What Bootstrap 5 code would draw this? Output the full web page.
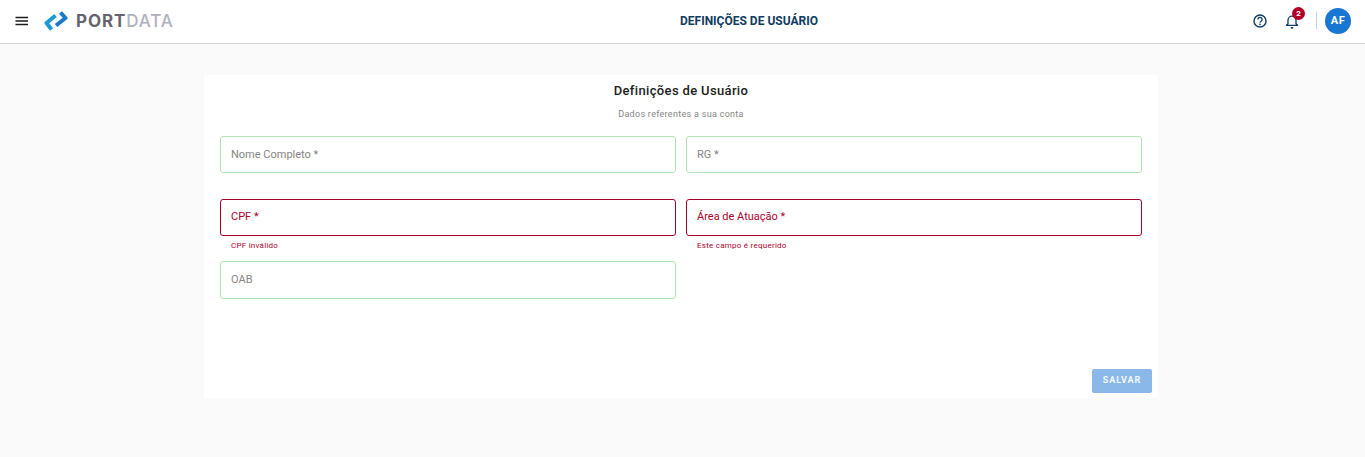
<!DOCTYPE html>
<html lang="pt-BR">
<head>
<meta charset="utf-8">
<title>Definições de Usuário</title>
<link rel="stylesheet" href="https://cdn.jsdelivr.net/npm/bootstrap@5.3.0/dist/css/bootstrap.min.css">
<style>
html,body{height:457px;overflow:hidden}
body{background:#fafafa;font-family:Roboto,"Liberation Sans",sans-serif;color:#212121}
.top-bar{height:44px;background:#fff;border-bottom:1px solid #d4d4d4;padding:0 14px 2px 15px}
.top-left{width:665px}
.menu-btn{width:14px;height:10px;flex:none}
.brand{margin-left:15px;gap:8px}
.brand-text{font-family:Inter,"Liberation Sans",sans-serif;font-size:17px;line-height:20px;letter-spacing:.9px;color:#64646e;font-weight:700}
.brand-text span{color:#b0b1bd;font-weight:500}
.top-title{font-size:12px;font-weight:700;color:#0f3c61;line-height:16px}
.top-right{flex:1 1 auto}
.icon-slot{position:relative;width:16px;height:16px}
.icon-slot svg{display:block}
.help{margin-right:16px}
.notif-count{position:absolute;left:8px;top:-6px;width:13px;height:13px;border-radius:50%;background:#b00029;color:#fff;font-size:8px;font-weight:700;line-height:13px;text-align:center}
.sep{width:1px;height:17px;background:#b9d3ea;margin:0 8px 0 16px}
.avatar{width:26px;height:26px;border-radius:50%;background:#1976d2;color:#fff;font-size:11px;font-weight:700;line-height:26px;text-align:center;letter-spacing:.5px}
.sheet{width:954px;height:323px;margin:31px 0 0 204px;background:#fff;border-radius:2px;padding:0 16px;position:relative}
.sheet-title{font-size:13px;font-weight:500;line-height:16px;padding-top:8px;letter-spacing:.35px;color:#212121;box-sizing:content-box}
.sheet-sub{font-size:9px;line-height:12px;margin-top:9px;color:#858585;letter-spacing:.3px}
.form-cols{display:grid;grid-template-columns:456px 456px;column-gap:10px;margin-top:16px}
.fld{height:63px}
.fld.short{height:62px}
.fld-box{height:37px;border:1px solid #b2e2b5;border-radius:3px;padding:0 10px;font-size:11px;line-height:35px;color:#858585;display:block;background:#fff}
.fld-box.last{height:38px}
.fld-err .fld-box{border-color:#a8002d;color:#b00029;line-height:34px}
.err-msg{font-size:8px;line-height:10px;color:#b00029;padding:5px 11px 0;letter-spacing:.25px}
.save-row{position:absolute;right:6px;bottom:5px}
.save-btn{width:60px;height:24px;background:#8ab8e8;border:0;border-radius:2px;color:#f4f8fd;font-size:9px;font-weight:700;letter-spacing:.95px;padding:0}
</style>
</head>
<body>
<header class="top-bar d-flex align-items-center">
  <div class="top-left d-flex align-items-center">
    <svg class="menu-btn" viewBox="0 0 14 10"><path d="M.5 1.500h12.500M.5 5h12.500M.5 8.500h12.500" stroke="#1c1c1c" stroke-width="1.300" fill="none"/></svg>
    <div class="brand d-flex align-items-center">
      <svg width="24" height="22" viewBox="0 0 24 22" fill="none" stroke-width="4" stroke-linejoin="round"><polyline points="11.500,5.500 2.500,13 7.500,19.500" stroke="#1a9ad6"/><polyline points="12,15.500 21.500,8 16.500,2.500" stroke="#1b78c8"/></svg>
      <div class="brand-text">PORT<span>DATA</span></div>
    </div>
  </div>
  <div class="top-title">DEFINIÇÕES DE USUÁRIO</div>
  <div class="top-right d-flex align-items-center justify-content-end">
    <div class="icon-slot help">
      <svg width="16" height="16" viewBox="0 0 16 16" fill="none"><circle cx="8" cy="8" r="6" stroke="#0f3c61" stroke-width="1.400"/><path d="M5.900 6.400a2.100 2.100 0 1 1 3.200 1.800c-.7.400-1.100.8-1.100 1.500" stroke="#0f3c61" stroke-width="1.300"/><circle cx="8" cy="11.400" r=".8" fill="#0f3c61"/></svg>
    </div>
    <div class="icon-slot">
      <svg width="16" height="16" viewBox="0 0 16 16" fill="none"><path d="M2.500 12.300h11l-1.500-1.600V7.200A4 4 0 0 0 4 7.200v3.500z" stroke="#0f3c61" stroke-width="1.300" stroke-linejoin="round"/><path d="M6.700 14h2.600v.4a1.300 1.300 0 0 1-2.600 0z" fill="#0f3c61"/></svg>
      <span class="notif-count">2</span>
    </div>
    <div class="sep"></div>
    <div class="avatar">AF</div>
  </div>
</header>
<main class="sheet">
  <div class="sheet-title text-center">Definições de Usuário</div>
  <div class="sheet-sub text-center">Dados referentes a sua conta</div>
  <form class="form-cols">
    <div class="fld"><label class="fld-box">Nome Completo *</label></div>
    <div class="fld"><label class="fld-box">RG *</label></div>
    <div class="fld short fld-err"><label class="fld-box">CPF *</label><div class="err-msg">CPF inválido</div></div>
    <div class="fld short fld-err"><label class="fld-box">Área de Atuação *</label><div class="err-msg">Este campo é requerido</div></div>
    <div class="fld"><label class="fld-box last">OAB</label></div>
  </form>
  <div class="save-row"><button type="button" class="save-btn">SALVAR</button></div>
</main>
<script src="https://cdn.jsdelivr.net/npm/bootstrap@5.3.0/dist/js/bootstrap.bundle.min.js"></script>
</body>
</html>
